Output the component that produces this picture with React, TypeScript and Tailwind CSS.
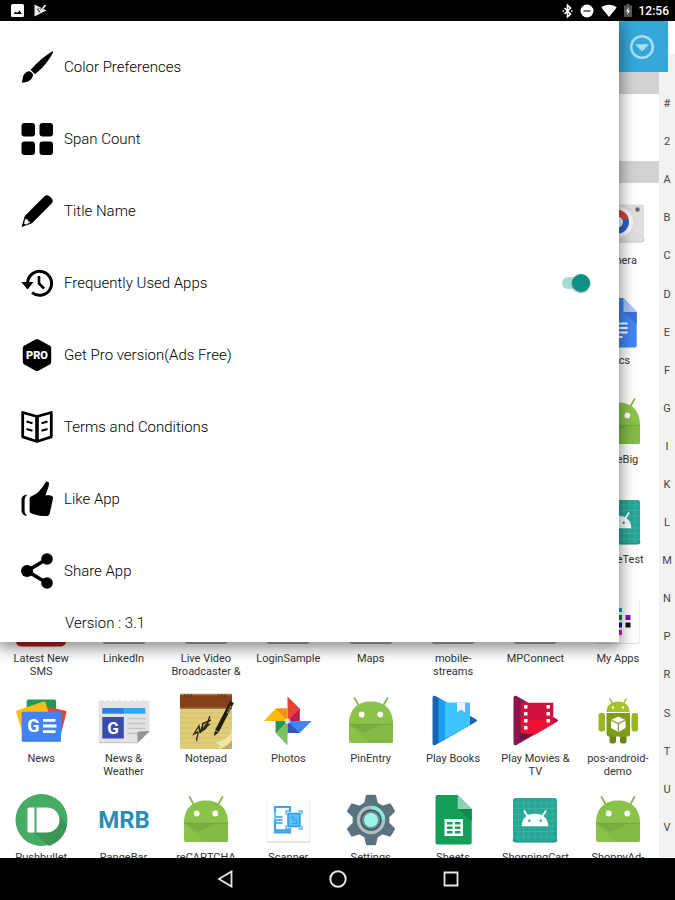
import { useState } from "react";
import type { ReactNode } from "react";

type MenuItem = {
  label: string;
  icon: ReactNode;
};

type AppEntry = {
  name: string;
  icon: ReactNode;
  last?: boolean;
};

const LETTERS = [
  "#", "2", "A", "B", "C", "D", "E", "F", "G", "I",
  "K", "L", "M", "N", "P", "R", "S", "T", "U", "V",
];

const TOOTH_ANGLES = [0, 60, 120, 180, 240, 300];

/* ---------- menu icons ---------- */

function MenuSvg({ children }: { children: ReactNode }) {
  return (
    <svg viewBox="0 0 32 36" className="h-9 w-8 shrink-0" aria-hidden="true">
      {children}
    </svg>
  );
}

const brushIcon = (
  <MenuSvg>
    <path d="M31.3 2.2c.9.6.8 1.3.3 2.2-4 7.3-10.3 15.2-17.6 20.8l-4.4-4.4C16.5 13.2 24 6.5 31.3 2.2Z" />
    <path d="M8.4 22.2c1.9.4 3.4 2 3.7 4C11 31.600 5.500 33.400.5 33.600c1.700-2.400.6-4.500 2-7.400 1.100-2.300 3.400-3.900 5.900-4Z" />
  </MenuSvg>
);

const gridIcon = (
  <MenuSvg>
    <rect x="0.5" y="2" width="13.5" height="13.5" rx="3" />
    <rect x="18.5" y="2" width="13.5" height="13.5" rx="3" />
    <rect x="0.5" y="20.5" width="13.5" height="13.5" rx="3" />
    <rect x="18.5" y="20.5" width="13.5" height="13.5" rx="3" />
  </MenuSvg>
);

const pencilIcon = (
  <MenuSvg>
    <path d="M23.5 3.200c1.400-1.400 3.400-1.300 5 .1l2 2c1.600 1.600 1.700 3.600.3 5L11 30.200.5 34 3.800 23Z" />
    <path d="m4.600 26 1.700.7 1 2 1.700.7-4.800 1.900-.8-.9Z" fill="#fff" stroke="#fff" strokeWidth="0.6" />
  </MenuSvg>
);

const historyIcon = (
  <MenuSvg>
    <path d="M6.600 18a12 12 0 1 1 4.500 9.700" fill="none" stroke="#000" strokeWidth="3" />
    <path d="M.3 17h12.200l-5.900 7.400Z" />
    <path d="M18 11v7.500l5 5" fill="none" stroke="#000" strokeWidth="2.6" />
  </MenuSvg>
);

const proIcon = (
  <MenuSvg>
    <path d="M14.500 2.500q1.500-.8 3 0l11.500 6.200q1.200.8 1.200 2.200v14.200q0 1.400-1.200 2.200l-11.500 6.400q-1.500.8-3 0L3 27.300q-1.200-.8-1.200-2.200V10.900Q1.800 9.500 3 8.700Z" />
    <text x="16" y="22" textAnchor="middle" fill="#fff" fontSize="11" fontWeight="900">
      PRO
    </text>
  </MenuSvg>
);

const bookIcon = (
  <MenuSvg>
    <path
      d="M16 7.500 1.700 3.500v24.300L16 32.500l14.300-4.700V3.500L16 7.500Z"
      fill="none"
      stroke="#000"
      strokeWidth="2.8"
      strokeLinejoin="round"
    />
    <path d="M16 7.500v25" stroke="#000" strokeWidth="3.6" />
    <path
      d="m5.500 12.500 6 1.700m-6 5.800 6 1.700M26.500 12.500l-6 1.700m6 5.800-6 1.700"
      stroke="#000"
      strokeWidth="2.2"
    />
  </MenuSvg>
);

const likeIcon = (
  <MenuSvg>
    <path d="M10 15.500c4-1.500 8-4.500 11.200-9L24.800 1c1-1 3.200-.2 3.200 1.600 0 3.900-2.600 8-3.500 11.900 2.500-.6 5.500-.5 7 .9.500.5.700 1.300.500 2.100l-3.300 15c-.3 1.500-1.500 2.700-3.200 2.600-4.600.1-10.500-1-15-2.600-1.400-.6-1.900-1.300-1.900-2.700V18c0-1.300.4-2 1.400-2.500Z" />
    <path d="M6.500 13.700C3 13.700.5 15.500.5 19v10c0 3 2 6 5.600 5.800-2.200-2-2.500-3.500-2.500-6V20c0-2.600.5-4.600 2.900-6.300Z" />
  </MenuSvg>
);

const shareIcon = (
  <MenuSvg>
    <path d="M26 6 6 18l20 12" fill="none" stroke="#000" strokeWidth="3.6" />
    <circle cx="6" cy="18" r="6" />
    <circle cx="26" cy="6" r="5.8" />
    <circle cx="26" cy="30" r="5.8" />
  </MenuSvg>
);

/* ---------- launcher icons ---------- */

function AppSvg({ children }: { children: ReactNode }) {
  return (
    <svg viewBox="0 0 56 56" className="size-14 shrink-0" aria-hidden="true">
      {children}
    </svg>
  );
}

const androidIcon = (
  <AppSvg>
    <path d="m11.500 5 4 7M44.500 5l-4 7" stroke="#8ab84a" strokeWidth="1.8" strokeLinecap="round" />
    <path d="M6 31C6 16 15 8.500 28 8.500S50 16 50 31v17q0 2-2 2H8q-2 0-2-2Z" fill="#8bc34a" />
    <path d="M6 31h44v17q0 2-2 2H26L6 31Z" fill="#84bb45" />
    <path d="m7 31.500 13 8.500 18-8.500Z" fill="#7aac40" />
    <path d="M6 31.300h44" stroke="#6f9f38" strokeWidth="0.8" />
    <circle cx="18.7" cy="21.5" r="2.9" fill="#fff" />
    <circle cx="37.3" cy="21.5" r="2.9" fill="#fff" />
  </AppSvg>
);

const androidTileIcon = (
  <AppSvg>
    <rect x="6" y="6" width="44" height="44" rx="2.5" fill="#26a695" />
    <path
      d="M11 6v44M16.500 6v44M22 6v44M28 6v44M34 6v44M39.500 6v44M45 6v44M6 11h44M6 16.500h44M6 22h44M6 28h44M6 34h44M6 39.500h44M6 45h44"
      stroke="#4bb9ab"
      strokeWidth="0.6"
    />
    <path d="M6 47.500q0 2.500 2.500 2.500h39q2.500 0 2.500-2.500" fill="none" stroke="#1b8577" />
    <path d="m17 18.500 4 6.500m18-6.500L35 25" stroke="#fff" strokeWidth="1.8" />
    <path d="M14.700 34.300c0-8 5.500-12.600 13.300-12.600s13.300 4.600 13.300 12.600Z" fill="#fff" />
    <circle cx="22.3" cy="28.7" r="1.2" fill="#26a695" />
    <circle cx="33.7" cy="28.7" r="1.2" fill="#26a695" />
  </AppSvg>
);

const cameraIcon = (
  <AppSvg>
    <rect x="2" y="9.5" width="52" height="37" rx="3" fill="#dedede" />
    <path d="M2 44q0 3 3 3h46q3 0 3-3" fill="none" stroke="#bcbcbc" />
    <circle cx="27.5" cy="27" r="15.5" fill="#f8f8f8" />
    <circle cx="27.5" cy="27" r="8.5" fill="none" stroke="#2f62c9" strokeWidth="6" />
    <path d="M19 24.500a8.500 8.500 0 0 1 16.500-.5" fill="none" stroke="#dd4535" strokeWidth="6" />
    <circle cx="47.5" cy="14.5" r="2.2" fill="#666" />
  </AppSvg>
);

const docsIcon = (
  <AppSvg>
    <path d="M12.500 3h21l13.200 14v33.500q0 2-2 2H12.500q-2 0-2-2V5q0-2 2-2Z" fill="#4285f4" />
    <path d="m33.500 17 13.200 12V17Z" fill="#3a73d6" />
    <path d="M33.500 3v14h13.200Z" fill="#a8c6fa" />
    <path d="M19 28.500h18.500M19 33h18.500M19 37.500h18.500M19 42h13.500" stroke="#fff" strokeWidth="2.2" />
  </AppSvg>
);

const myAppsIcon = (
  <AppSvg>
    <rect x="6.5" y="7" width="43.5" height="44" rx="2" fill="#ddd" />
    <rect x="6" y="6" width="43.5" height="44" rx="2" fill="#fff" />
    <path d="M27 15h5v4h-5Z" fill="#1aa6b8" />
    <path d="M27 22h5v5h-5Z" fill="#13851e" />
    <path d="M35.500 22h5v5h-5Z" fill="#7a10dd" />
    <path d="M27 29.500h5v5h-5Z" fill="#1515a0" />
    <path d="M35.500 29.500h5v5h-5Z" fill="#111" />
    <path d="M27 37h5v5h-5Z" fill="#d517cf" />
  </AppSvg>
);

const redSmsIcon = (
  <AppSvg>
    <rect x="3" y="6" width="50" height="47.5" rx="5" fill="#b3201d" />
  </AppSvg>
);

const plainTileIcon = (
  <AppSvg>
    <rect x="7" y="6" width="42" height="45" rx="2" fill="#a9a9ad" />
  </AppSvg>
);

const newsIcon = (
  <AppSvg>
    <path d="M13.700 8q0-1.500 1.500-1.500H41.500q1.500 0 1.500 1.500v14H13.700Z" fill="#1e9a51" />
    <path d="m33 13.500 19.500 4.200q1.300.4 1 1.600L48 41H33Z" fill="#e5473b" />
    <path d="M4 17.500 30.500 8.600q1.500-.4 2 1L37 24 9.500 40 3.300 19.200q-.3-1.300.7-1.700Z" fill="#fbbc14" />
    <rect x="8.7" y="18.7" width="39.3" height="29.8" rx="1.5" fill="#4384f2" />
    <path d="M9 48h39" stroke="#356bcb" />
    <text x="20.5" y="39.3" textAnchor="middle" fill="#fff" fontSize="18" fontWeight="700">
      G
    </text>
    <path d="M30 27.300h12.500M30 33h13.500M30 38.700h12.500" stroke="#fff" strokeWidth="2.8" />
  </AppSvg>
);

const weatherIcon = (
  <AppSvg>
    <path
      d="M2.700 8l3-1 3 1.500 3-1.500 3 1.500 3-1.500 3 1.500 3-1.500 3 1.500 3-1.500 3 1.500 3-1.500 3 1.500 3-1.500 3 1.500 3-1.500 3 1.500 2.700-1V38L41.500 50H3.500q-.8 0-.8-.8Z"
      fill="#e3e3e3"
    />
    <path d="M3 49.700h38.500" stroke="#bdbdbd" />
    <path d="M6.300 15h22v5.700h-22Z" fill="#2f7de9" />
    <path d="M28.300 15h21v5.700h-21Z" fill="#29aaf7" />
    <path d="M6.300 24h21.500v21.500H6.300Z" fill="#394ab3" />
    <text x="17" y="41" textAnchor="middle" fill="#fff" fontSize="17" fontWeight="700">
      G
    </text>
    <path d="M31.500 25.500h18M31.500 30.500h18M31.500 35.500h18M31.500 40.500h11" stroke="#c4c4c4" strokeWidth="1.6" />
    <path d="M41.500 50V40q0-1.500 1.500-1.500L54 38Z" fill="#949494" />
  </AppSvg>
);

const notepadIcon = (
  <AppSvg>
    <path d="M2 1h52v55H2Z" fill="#dfcd79" />
    <path
      d="M2 20h52M2 25h52M2 30h52M2 35h52M2 40h52M2 45h52M2 50h52"
      stroke="#cdb964"
      strokeWidth="0.7"
    />
    <path d="M2 1h52v13.500H2Z" fill="#87401a" />
    <path d="M2 1.500h52" stroke="#bd7a31" strokeWidth="1.6" />
    <path d="M7 1v3m3-3v3m3-3v3M41 1v3m3-3v3m3-3v3" stroke="#504020" strokeWidth="1.2" />
    <path d="M2 15h52" stroke="#5e2b0d" />
    <path
      d="M19 48c-2-3 2-5 1-9l-4 2 5-8 1 7 3-9-1 7c3-2 2-6 5-7l-2 5c4-3 2-8 5-13m-8 8 9-4m-5 7 4-3"
      fill="none"
      stroke="#2d2614"
      strokeWidth="1.4"
    />
    <path d="M54 9 39 38" stroke="#211d16" strokeWidth="4.2" />
    <path d="m53 13-4 8" stroke="#b99941" strokeWidth="1.5" strokeDasharray="2 1" />
    <path d="m37 38 3.500 1.500L36 43Z" fill="#151208" />
    <path d="M54 38q-4 9-18 12 8 0 5 6h13Z" fill="#f0e3a4" />
    <path d="M54 47q-4 6-12 9h12Z" fill="#c5ae5b" />
  </AppSvg>
);

const photosIcon = (
  <AppSvg>
    <path d="M27.500 3.500 39.700 15.500V28H27.500Z" fill="#e94335" />
    <path d="M27.500 28 39.700 15.500V28Z" fill="#b82056" />
    <path d="M51.700 28 39.700 40H27.500V28Z" fill="#4285f4" />
    <path d="M27.500 28 39.700 40H27.500Z" fill="#3159b8" />
    <path d="M27.500 52.500 15.700 40V28h11.800Z" fill="#7cc264" />
    <path d="M27.500 28 15.700 40V28Z" fill="#249552" />
    <path d="M4 28 15.700 15.500h11.800V28Z" fill="#fbbc05" />
    <path d="M27.500 28 15.700 15.500h11.800Z" fill="#f1911c" />
    <circle cx="27.5" cy="28" r="2.8" fill="#fff" fillOpacity="0.7" />
  </AppSvg>
);

const playBooksIcon = (
  <AppSvg>
    <path d="M7.500 5q0-3 2.600-2.200L51 26.200q2 1.300 0 2.600L10 52.200q-2.500.8-2.500-2.200Z" fill="#1766b5" />
    <path d="M13.500 5 22 9.700H45v22L13.500 50Z" fill="#1d9df0" />
    <path d="M20 9.700h12v9.500l4-2.500 4 2.500V9.700h5v22L20 46Z" fill="#40c4ff" />
    <path d="M32 9.700h8v9.500l-4-2.500-4 2.500Z" fill="#e8f8ff" />
  </AppSvg>
);

const playMoviesIcon = (
  <AppSvg>
    <path d="M6.500 5q0-3 2.600-2.200L50 26.200q2 1.300 0 2.600L9 52.200q-2.500.8-2.500-2.200Z" fill="#8a164c" />
    <path d="M12.500 7v41L31 37.500 12.500 28Z" fill="#6d1244" />
    <path d="M13.500 9.700h32.800V31L14 40Z" fill="#d0123f" />
    <path d="M13.500 27h32.800v4L28 41.500 13.500 40Z" fill="#ee1233" />
    <path
      d="M17 12h3.500v3.500H17Zm0 7h3.500v3.500H17Zm0 7h3.500v3.500H17Zm0 7h3.500v3.500H17ZM39.500 12H43v3.500h-3.500Zm0 7H43v3.500h-3.500Zm0 7H43v3.500h-3.500Z"
      fill="#fff"
    />
  </AppSvg>
);

const posAndroidIcon = (
  <AppSvg>
    <path d="m19.500 5.500 3 5m14-5-3 5" stroke="#8fae1c" strokeWidth="1.3" />
    <path d="M16.500 19c0-7 5-10.500 11.500-10.500S39.500 12 39.500 19Z" fill="#a4c22a" />
    <circle cx="23" cy="14.5" r="1.2" fill="#fff" />
    <circle cx="33" cy="14.5" r="1.2" fill="#fff" />
    <rect x="8.5" y="20" width="6.5" height="18.5" rx="2.5" fill="#98b62a" />
    <rect x="41.5" y="20" width="6.5" height="18.5" rx="2.5" fill="#98b62a" />
    <rect x="19.5" y="38" width="6.5" height="12.5" rx="2" fill="#6c8615" />
    <rect x="30" y="38" width="6.5" height="12.5" rx="2" fill="#6c8615" />
    <path d="M16.500 20h23.500v21q0 2.500-2.500 2.500H19q-2.500 0-2.500-2.500Z" fill="#7f9c1b" />
    <path d="m28.300 23.500 7.200 3.500v8l-7.200 4-7.200-4v-8Z" fill="#fff" />
    <path d="m21.500 27.200 6.800 3.300 6.800-3.300m-6.800 3.300v8" fill="none" stroke="#7f9c1b" strokeWidth="1.2" />
  </AppSvg>
);

const pushbulletIcon = (
  <AppSvg>
    <circle cx="28.5" cy="28" r="26" fill="#46ab64" />
    <path d="M21 41 36 54a26 26 0 0 0 18-21L43 20Z" fill="#3b9757" />
    <path d="M16 15.500h5.500v25H16q-1.500 0-1.500-1.500V17q0-1.500 1.500-1.500Z" fill="#fff" />
    <path d="M23.500 15.500H34a12.500 12.500 0 0 1 0 25H23.500Z" fill="#fff" />
  </AppSvg>
);

const mrbIcon = (
  <AppSvg>
    <text x="28" y="36" textAnchor="middle" fill="#2b8cb8" fontSize="24" fontWeight="700">
      MRB
    </text>
  </AppSvg>
);

const scannerIcon = (
  <AppSvg>
    <rect x="6.5" y="7" width="43.5" height="44" rx="2" fill="#dcdcdc" />
    <rect x="6.5" y="6" width="43" height="43.5" rx="2" fill="#fdfdfd" />
    <path d="M15 20v-5h15v5M15 27v13.500h15V36" fill="none" stroke="#3aa5ee" strokeWidth="2.2" />
    <path d="M15 20v8" stroke="#6cd0f7" strokeWidth="2.2" />
    <path d="M15 38.500h15" stroke="#3aa5ee" strokeWidth="2.6" />
    <path d="M15.500 25h7m-7 3h7m-7 3h7" stroke="#54b9f2" strokeWidth="2.2" />
    <rect x="28" y="21.5" width="12" height="13" fill="#5cc0f4" stroke="#2b9be8" strokeWidth="1.5" />
    <path d="M31 25h2v3h4v3.500h-5" fill="none" stroke="#3a9be8" strokeWidth="1.2" />
    <path d="M26 22.500V19h3.500m9 0H42v3.500M26 33.500V37h3.500m9 0H42v-3.500" fill="none" stroke="#4bb4f1" strokeWidth="1.3" />
  </AppSvg>
);

const settingsIcon = (
  <AppSvg>
    <g fill="#5b737e">
      <circle cx="28" cy="28" r="18.5" />
      {TOOTH_ANGLES.map((angle) => (
        <path
          key={angle}
          d="M20.500 14 23 3.500q.2-.8 1-.8h8q.8 0 1 .8L35.500 14Z"
          transform={`rotate(${angle} 28 28)`}
        />
      ))}
    </g>
    <circle cx="28" cy="28" r="12.5" fill="#455a64" stroke="#aebcc3" strokeWidth="3.4" />
    <path d="M28 15.500A12.500 12.500 0 0 1 40.500 28" fill="none" stroke="#84e8e0" strokeWidth="3.4" />
    <circle cx="28" cy="28" r="8" fill="#9bf5e6" stroke="#6d8f96" strokeWidth="2" />
  </AppSvg>
);

const sheetsIcon = (
  <AppSvg>
    <path d="M12.500 3h20.200l14 14v33.500q0 2-2 2H12.500q-2 0-2-2V5q0-2 2-2Z" fill="#159d5a" />
    <path d="m32.700 17 14 12V17Z" fill="#118a4d" />
    <path d="M32.700 3v14h14Z" fill="#8fd0b0" />
    <path d="M19.500 27H38v17H19.500Z" fill="#fff" />
    <path d="M22 30h5.500v2.500H22Zm8 0h5.500v2.500H30ZM22 34.500h5.500V37H22Zm8 0h5.500V37H30ZM22 39h5.500v2.500H22Zm8 0h5.500v2.500H30Z" fill="#159d5a" />
  </AppSvg>
);

const MENU_TOP: MenuItem[] = [
  { label: "Color Preferences", icon: brushIcon },
  { label: "Span Count", icon: gridIcon },
  { label: "Title Name", icon: pencilIcon },
];

const MENU_BOTTOM: MenuItem[] = [
  { label: "Get Pro version(Ads Free)", icon: proIcon },
  { label: "Terms and Conditions", icon: bookIcon },
  { label: "Like App", icon: likeIcon },
  { label: "Share App", icon: shareIcon },
];

const APPS: AppEntry[] = [
  { name: "Camera", icon: cameraIcon, last: true },
  { name: "Docs", icon: docsIcon, last: true },
  { name: "CubeBig", icon: androidIcon, last: true },
  { name: "ImageTest", icon: androidTileIcon, last: true },
  { name: "Latest New SMS", icon: redSmsIcon },
  { name: "LinkedIn", icon: plainTileIcon },
  { name: "Live Video Broadcaster &", icon: plainTileIcon },
  { name: "LoginSample", icon: plainTileIcon },
  { name: "Maps", icon: plainTileIcon },
  { name: "mobile-streams", icon: plainTileIcon },
  { name: "MPConnect", icon: plainTileIcon },
  { name: "My Apps", icon: myAppsIcon },
  { name: "News", icon: newsIcon },
  { name: "News & Weather", icon: weatherIcon },
  { name: "Notepad", icon: notepadIcon },
  { name: "Photos", icon: photosIcon },
  { name: "PinEntry", icon: androidIcon },
  { name: "Play Books", icon: playBooksIcon },
  { name: "Play Movies & TV", icon: playMoviesIcon },
  { name: "pos-android-demo", icon: posAndroidIcon },
  { name: "Pushbullet", icon: pushbulletIcon },
  { name: "RangeBar", icon: mrbIcon },
  { name: "reCAPTCHA", icon: androidIcon },
  { name: "Scanner", icon: scannerIcon },
  { name: "Settings", icon: settingsIcon },
  { name: "Sheets", icon: sheetsIcon },
  { name: "ShoppingCart", icon: androidTileIcon },
  { name: "ShoppyAd-", icon: androidIcon },
];

function StatusBar() {
  return (
    <div className="flex h-[21px] shrink-0 items-center bg-black pr-[6px] pl-[11px] text-white">
      <svg viewBox="0 0 13 13" className="size-[13px]" aria-hidden="true">
        <rect width="13" height="13" rx="1.5" fill="#fff" />
        <path d="m2.500 10 2.200-2.500 1.500 1.500L8.500 6.500l2.500 3.500Z" fill="#000" />
      </svg>
      <svg viewBox="0 0 13 13" className="ml-[10px] size-[13px]" aria-hidden="true">
        <path d="M.5.500 12.500 6.500.5 12.500Z" fill="#e8e8e8" />
        <path d="m4 4.500 2 2.500L11.500 1" fill="none" stroke="#000" strokeWidth="2.4" />
        <path d="m4.500 4.500 2 2.500L11.500 1" fill="none" stroke="#fff" strokeWidth="1.5" />
      </svg>
      <div className="ml-auto flex items-center gap-[7px]">
        <svg viewBox="0 0 11 14" className="h-[14px] w-[11px]" aria-hidden="true">
          <path d="m2.500 4 6 6-3 2.800V1.200l3 2.800-6 6" fill="none" stroke="#fff" strokeWidth="1.6" />
          <path d="M.5 6.300h1.500v1.500H.5Zm8.500 0h1.500v1.500H9Z" fill="#fff" />
        </svg>
        <svg viewBox="0 0 14 14" className="size-[14px]" aria-hidden="true">
          <circle cx="7" cy="7" r="6.5" fill="#fff" />
          <path d="M3.500 6h7v2h-7Z" fill="#777" />
        </svg>
        <svg viewBox="0 0 16 13" className="h-[13px] w-[16px]" aria-hidden="true">
          <path d="M8 13 .3 3.500C4.500-.3 11.500-.3 15.700 3.500Z" fill="#fff" />
        </svg>
        <svg viewBox="0 0 8 13" className="h-[13px] w-[8px]" aria-hidden="true">
          <path d="M2.500 0h3v1.500H8V13H0V1.500h2.500Z" fill="#555" />
          <path d="M4.800 3 2 7.500h1.700L3.300 11 6 6.500H4.300Z" fill="#fff" />
        </svg>
        <time className="text-[12px] leading-4 font-medium">12:56</time>
      </div>
    </div>
  );
}

function SettingsPanel() {
  const [frequent, setFrequent] = useState(true);

  const row = (item: MenuItem) => (
    <li key={item.label}>
      <button type="button" className="flex h-[72px] w-full items-center gap-[11px] pl-[21px] text-left">
        {item.icon}
        {item.label}
      </button>
    </li>
  );

  return (
    <aside className="absolute top-0 right-14 left-0 z-20 bg-white pt-[10px] pb-[9px] text-[15px] leading-5 font-light text-black shadow-[0_4px_14px_2px_rgba(0,0,0,0.45)]">
      <ul>
        {MENU_TOP.map(row)}
        <li className="flex h-[72px] items-center gap-[11px] pr-[29px] pl-[21px]">
          {historyIcon}
          <label htmlFor="frequent" className="flex-1">
            Frequently Used Apps
          </label>
          <input
            id="frequent"
            type="checkbox"
            role="switch"
            checked={frequent}
            onChange={(e) => setFrequent(e.target.checked)}
            className="relative h-[12px] w-[28px] appearance-none rounded-full bg-[#c8c8c8] before:absolute before:-top-[3px] before:left-0 before:size-[18px] before:rounded-full before:bg-[#f1f1f1] before:shadow-[0_1px_2px_rgba(0,0,0,0.4)] checked:bg-[#a6dad3] checked:before:left-[10px] checked:before:bg-[#0c9282]"
          />
        </li>
        {MENU_BOTTOM.map(row)}
      </ul>
      <p className="mt-[6px] pl-[65px]">Version : 3.1</p>
    </aside>
  );
}

function NavBar() {
  return (
    <nav className="flex h-[42px] shrink-0 items-center justify-center gap-24 bg-black">
      <button type="button" aria-label="Back">
        <svg viewBox="0 0 16 18" className="h-[18px] w-4" aria-hidden="true">
          <path d="M14.500 1.500v15L2 9Z" fill="none" stroke="#e6e6e6" strokeWidth="1.8" />
        </svg>
      </button>
      <button type="button" aria-label="Home">
        <svg viewBox="0 0 18 18" className="size-[18px]" aria-hidden="true">
          <circle cx="9" cy="9" r="7.7" fill="none" stroke="#e6e6e6" strokeWidth="2" />
        </svg>
      </button>
      <button type="button" aria-label="Recent apps">
        <svg viewBox="0 0 16 16" className="size-4" aria-hidden="true">
          <path d="M1.500 1.500h13v13h-13Z" fill="none" stroke="#e6e6e6" strokeWidth="1.8" />
        </svg>
      </button>
    </nav>
  );
}

export default function App() {
  return (
    <div className="flex h-screen flex-col bg-white font-['Roboto','Liberation_Sans',sans-serif]">
      <StatusBar />
      <main className="relative flex min-h-0 flex-1 overflow-hidden">
        <div className="flex min-w-0 flex-1 flex-col">
          <header className="relative z-10 -mr-[9px] flex h-[51px] shrink-0 justify-end bg-[#35a7d9]">
            <button type="button" aria-label="More" className="flex w-[52px] items-center justify-center">
              <svg viewBox="0 0 26 26" className="size-[26px]" aria-hidden="true">
                <circle cx="13" cy="13" r="10.8" fill="none" stroke="#a9def5" strokeWidth="2.6" />
                <path d="M6 10.200h14L13 17.500Z" fill="#a9def5" />
              </svg>
            </button>
          </header>
          <div className="h-[22px] shrink-0 bg-[#d2d2d2]" />
          <div className="h-[67px] shrink-0" />
          <div className="h-[22px] shrink-0 bg-[#d2d2d2]" />
          <ul className="-mb-[22px] grid min-h-0 flex-1 auto-rows-fr grid-cols-8">
            {APPS.map((app) => (
              <li key={app.name} className={app.last ? "col-start-8 min-h-0" : "min-h-0"}>
                <button type="button" className="flex w-full flex-col items-center gap-[3px] pt-3">
                  {app.icon}
                  <span className="w-[76px] text-center text-[11px] leading-[13px] text-[#333]">
                    {app.name}
                  </span>
                </button>
              </li>
            ))}
          </ul>
        </div>
        <ol className="mt-[33px] flex w-4 shrink-0 flex-col bg-[#f2f2f2] pt-[31px] pb-[11px] text-[11px] leading-4 text-[#444]">
          {LETTERS.map((letter) => (
            <li key={letter} className="flex flex-1 items-center justify-center">
              {letter}
            </li>
          ))}
        </ol>
        <SettingsPanel />
      </main>
      <NavBar />
    </div>
  );
}
